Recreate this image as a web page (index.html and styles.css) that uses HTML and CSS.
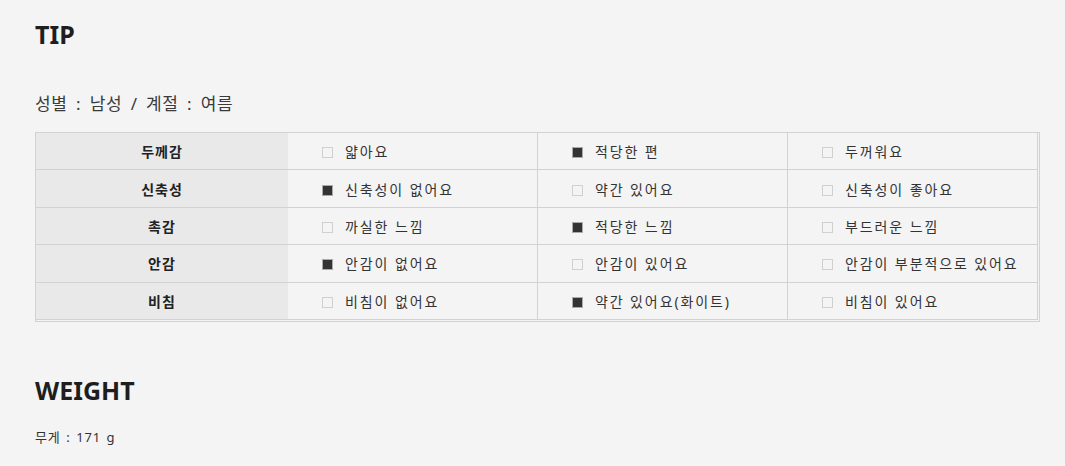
FILE: index.html
```html
<!DOCTYPE html>
<html lang="ko">
<head>
<meta charset="utf-8">
<link rel="stylesheet" href="styles.css">
</head>
<body>
<div class="page">
  <h2 class="title">TIP</h2>
  <p class="meta">성별 : 남성 / 계절 : 여름</p>
  <table class="tip-table">
    <tr>
      <th>두께감</th>
      <td><span class="box"></span>얇아요</td>
      <td><span class="box on"></span>적당한 편</td>
      <td class="last"><span class="box"></span>두꺼워요</td>
    </tr>
    <tr>
      <th>신축성</th>
      <td><span class="box on"></span>신축성이 없어요</td>
      <td><span class="box"></span>약간 있어요</td>
      <td class="last"><span class="box"></span>신축성이 좋아요</td>
    </tr>
    <tr>
      <th>촉감</th>
      <td><span class="box"></span>까실한 느낌</td>
      <td><span class="box on"></span>적당한 느낌</td>
      <td class="last"><span class="box"></span>부드러운 느낌</td>
    </tr>
    <tr>
      <th>안감</th>
      <td><span class="box on"></span>안감이 없어요</td>
      <td><span class="box"></span>안감이 있어요</td>
      <td class="last"><span class="box"></span>안감이 부분적으로 있어요</td>
    </tr>
    <tr>
      <th>비침</th>
      <td><span class="box"></span>비침이 없어요</td>
      <td><span class="box on"></span>약간 있어요(화이트)</td>
      <td class="last"><span class="box"></span>비침이 있어요</td>
    </tr>
  </table>
  <h2 class="title weight">WEIGHT</h2>
  <p class="small">무게 : 171 g</p>
</div>
</body>
</html>
```
FILE: styles.css
```css
html, body {
  margin: 0;
  padding: 0;
  background: #f4f4f4;
}
body {
  font-family: "Noto Sans", "Noto Sans CJK KR", sans-serif;
  color: #333;
}
.page {
  padding: 18px 25px 0 35px;
}
.title {
  margin: 0;
  font-family: "Noto Sans", "Noto Sans CJK KR", sans-serif;
  font-weight: 700;
  font-size: 25px;
  line-height: 32px;
  color: #1e1e1e;
}
.meta {
  margin: 40px 0 0 0;
  font-size: 17px;
  line-height: 28px;
  letter-spacing: 0.6px;
  word-spacing: 3.5px;
  color: #3a3a3a;
}
.tip-table {
  margin-top: 14px;
  width: 1005px;
  border-collapse: separate;
  border-spacing: 0;
  border: 1px solid #d2d2d2;
  padding: 0 1px 1px 0;
  table-layout: fixed;
}
.tip-table th,
.tip-table td {
  height: 36.4px;
  padding: 0;
  border-bottom: 1px solid #d2d2d2;
  white-space: nowrap;
}
.tip-table th {
  width: 251px;
  background: #e9e9e9;
  font-size: 14px;
  letter-spacing: 1px;
  font-weight: 700;
  color: #222;
  text-align: center;
}
.tip-table td {
  width: 249px;
  padding-left: 34px;
  border-right: 1px solid #d2d2d2;
  font-size: 14px;
  letter-spacing: 1.9px;
  color: #333;
  text-align: left;
  box-sizing: border-box;
}
.box {
  display: inline-block;
  width: 9px;
  height: 9px;
  border: 1px solid #d0d0d0;
  background: #f4f4f4;
  margin-right: 12px;
  vertical-align: -1px;
}
.box.on {
  background: #333;
  border-color: #aaa;
}
.weight {
  margin-top: 52px;
}
.small {
  margin: 21px 0 0 0;
  font-size: 13px;
  letter-spacing: 0.8px;
  word-spacing: 1.5px;
  line-height: 20px;
  color: #333;
}
```
